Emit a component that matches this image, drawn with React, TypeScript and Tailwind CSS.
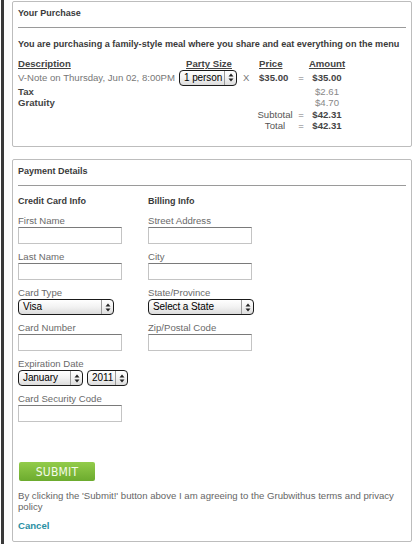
function Arrows() {
  return (
    <svg width="6" height="9" viewBox="0 0 6 9" className="shrink-0">
      <path d="M3 0.5 L5.5 3.5 H0.5 Z" fill="#222" />
      <path d="M3 8.5 L5.5 5.5 H0.5 Z" fill="#222" />
    </svg>
  );
}

function MacSelect({ value, width, height = "h-[16px]" }: { value: string; width: string; height?: string }) {
  return (
    <div
      className={`${width} ${height} flex items-center rounded-[4px] border border-[#1a1a1a] bg-gradient-to-b from-white via-[#f2f2f2] to-[#dcdcdc] text-[10px] text-[#000]`}
    >
      <span className="flex-1 whitespace-nowrap pl-[4px] leading-none tracking-[-0.1px]">{value}</span>
      <span className="flex h-full w-[12px] shrink-0 items-center justify-center border-l border-[#9a9a9a]">
        <Arrows />
      </span>
    </div>
  );
}

function TextInput() {
  return (
    <div className="h-[17px] w-[104px] border border-[#c4c4c4] border-t-[#7a7a7a] bg-white" />
  );
}

function Field({ label, children }: { label: string; children: React.ReactNode }) {
  return (
    <div className="flex flex-col">
      <div className="text-[9.6px] leading-[11px] text-[#6a6a6a]">{label}</div>
      <div className="mt-[1px]">{children}</div>
    </div>
  );
}

function Rule() {
  return <div className="mt-[8px] h-[2px] border-t border-[#9a9a9a] border-b-[#e6e6e6]" />;
}

export default function App() {
  return (
    <div
      className="min-h-[544px] w-[418px] bg-white pl-[1px]"
      style={{ fontFamily: '"Liberation Sans", Arial, sans-serif' }}
    >
      <div className="min-h-[544px] border-l-[3px] border-[#3a3a3a] pl-[8px] pr-[6px] pt-[1px]">
        {/* Your Purchase */}
        <div className="h-[146px] rounded-[2px] border border-[#bdbdbd] px-[5px] pt-[6px]">
          <div className="text-[9px] font-bold leading-[11px] text-[#3a3a3a]">Your Purchase</div>
          <Rule />
          <div className="mt-[10px] whitespace-nowrap text-[9.1px] font-bold leading-[11px] text-[#3a3a3a]">
            You are purchasing a family-style meal where you share and eat everything on the menu
          </div>

          <div className="mt-[8px] grid grid-cols-[161px_60px_17px_38px_14px_38px] text-[9.6px] leading-[11.5px]">
            <div className="font-bold text-[#444] underline">Description</div>
            <div className="text-center font-bold text-[#444] underline">Party Size</div>
            <div />
            <div className="pl-[3px] font-bold text-[#444] underline">Price</div>
            <div />
            <div className="text-center font-bold text-[#444] underline">Amount</div>

            <div className="flex items-center text-[#777]">V-Note on Thursday, Jun 02, 8:00PM</div>
            <div className="flex items-center">
              <MacSelect value="1 person" width="w-[58px]" height="h-[16px]" />
            </div>
            <div className="flex items-center pl-[4px] text-[#777]">X</div>
            <div className="flex items-center pl-[3px] font-bold text-[#444]">$35.00</div>
            <div className="flex items-center justify-center text-[#777]">=</div>
            <div className="flex items-center justify-center font-bold text-[#444]">$35.00</div>

            <div className="font-bold text-[#444]">Tax</div>
            <div className="col-span-4" />
            <div className="text-center text-[#888]">$2.61</div>

            <div className="font-bold text-[#444]">Gratuity</div>
            <div className="col-span-4" />
            <div className="text-center text-[#888]">$4.70</div>

            <div className="col-span-3" />
            <div className="text-center text-[#555]">Subtotal</div>
            <div className="text-center text-[#777]">=</div>
            <div className="text-center font-bold text-[#444]">$42.31</div>

            <div className="col-span-3" />
            <div className="text-center text-[#555]">Total</div>
            <div className="text-center text-[#777]">=</div>
            <div className="text-center font-bold text-[#444]">$42.31</div>
          </div>
        </div>

        {/* Payment Details */}
        <div className="mt-[12px] h-[383px] rounded-[2px] border border-[#bdbdbd] px-[5px] pt-[6px]">
          <div className="text-[9px] font-bold leading-[11px] text-[#3a3a3a]">Payment Details</div>
          <Rule />

          <div className="mt-[9px] flex">
            <div className="flex w-[130px] flex-col gap-[7px]">
              <div className="text-[9px] font-bold leading-[11px] text-[#3a3a3a]">Credit Card Info</div>
              <div className="mt-[1px]">
                <Field label="First Name"><TextInput /></Field>
              </div>
              <Field label="Last Name"><TextInput /></Field>
              <Field label="Card Type"><MacSelect value="Visa" width="w-[96px]" /></Field>
              <Field label="Card Number"><TextInput /></Field>
              <Field label="Expiration Date">
                <div className="flex gap-[4px]">
                  <MacSelect value="January" width="w-[65px]" />
                  <MacSelect value="2011" width="w-[41px]" />
                </div>
              </Field>
              <Field label="Card Security Code"><TextInput /></Field>
            </div>
            <div className="flex flex-col gap-[7px]">
              <div className="text-[9px] font-bold leading-[11px] text-[#3a3a3a]">Billing Info</div>
              <div className="mt-[1px]">
                <Field label="Street Address"><TextInput /></Field>
              </div>
              <Field label="City"><TextInput /></Field>
              <Field label="State/Province"><MacSelect value="Select a State" width="w-[106px]" /></Field>
              <Field label="Zip/Postal Code"><TextInput /></Field>
            </div>
          </div>

          <button
            type="button"
            className="mt-[40px] ml-[1px] flex h-[19px] w-[76px] items-center justify-center rounded-[2px] bg-gradient-to-b from-[#93cc4a] to-[#6cab2e] text-[12px] tracking-[0.2px] text-[#f4fbe9]"
            style={{ fontFamily: '"DejaVu Sans Condensed", "Liberation Sans Narrow", sans-serif' }}
          >
            SUBMIT
          </button>

          <p className="mt-[9px] text-[9.6px] leading-[11px] text-[#666]">
            By clicking the 'Submit!' button above I am agreeing to the Grubwithus terms and privacy policy
          </p>
          <div className="mt-[8px] text-[9.6px] font-bold leading-[11px] text-[#2a8fa3]">Cancel</div>
        </div>
      </div>
    </div>
  );
}
